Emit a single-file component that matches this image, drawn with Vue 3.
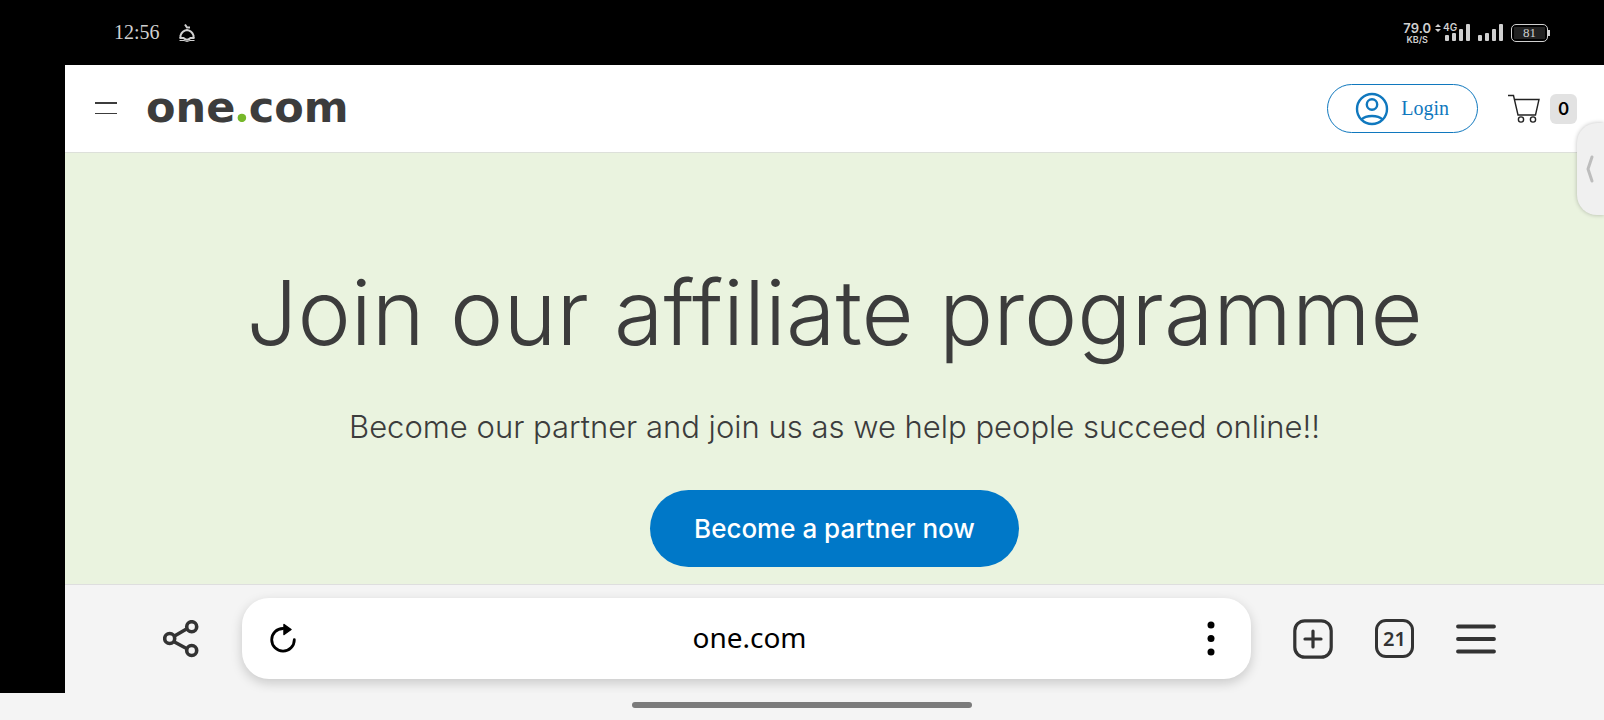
<template>
  <div class="screen">
    <div class="status-bar">
      <div class="status-left">
        <time class="clock">{{ time }}</time>
        <svg class="alarm" width="16" height="20" viewBox="0 0 16 20" fill="none" stroke="#d0d0d0" stroke-width="2">
          <path d="M1.500 15V12.500C2.500 9.500 5 7.500 8 7C11 7.500 13.500 9.500 14.500 12.500V15" />
          <path d="M0.500 15H4.500Q8 18.500 11.500 15H15.500" />
          <path d="M0.500 17.500H5L8 18.500L11 17.500H15.500" stroke-width="1" />
          <path d="M6 1.500L8 4.500H11" />
        </svg>
      </div>
      <div class="status-right">
        <div class="speed">
          <span class="speed-value">79.0</span>
          <span class="speed-unit">KB/S</span>
        </div>
        <div class="network">
          <svg width="6" height="8" viewBox="0 0 6 8" fill="#d0d0d0">
            <path d="M3 0L6 3H0ZM0 5H6L3 8Z" />
          </svg>
          <div class="mobile">
            <span class="network-type">4G</span>
            <svg width="25" height="17" viewBox="0 0 25 17" fill="#d0d0d0">
              <rect x="0" y="11" width="4" height="6" rx="1" />
              <rect x="7" y="9" width="4" height="8" rx="1" />
              <rect x="14" y="5" width="4" height="12" rx="1" />
              <rect x="21" y="0" width="4" height="17" rx="1" />
            </svg>
          </div>
        </div>
        <svg width="25" height="17" viewBox="0 0 25 17" fill="#d0d0d0">
          <rect x="0" y="11" width="4" height="6" rx="1" />
          <rect x="7" y="9" width="4" height="8" rx="1" />
          <rect x="14" y="5" width="4" height="12" rx="1" />
          <rect x="21" y="0" width="4" height="17" rx="1" />
        </svg>
        <div class="battery"><span class="battery-level">{{ battery }}</span></div>
      </div>
    </div>

    <div class="frame">
      <div class="cutout"></div>
      <div class="page">
        <header class="site-header">
          <button class="icon-button" aria-label="Menu">
            <svg width="22" height="14" viewBox="0 0 22 14" fill="#3c3c3c">
              <rect y="0" width="22" height="2" />
              <rect y="11" width="22" height="1" />
            </svg>
          </button>
          <a href="#" class="logo">one<span class="logo-dot">.</span>com</a>
          <button class="login">
            <svg width="34" height="34" viewBox="0 0 34 34" fill="none" stroke="#1078be" stroke-width="2.400">
              <circle cx="17" cy="17" r="15" />
              <circle cx="17" cy="12.500" r="5.200" />
              <path d="M6.500 27.500C11 22.800 23 22.800 27.500 27.500" />
            </svg>
            Login
          </button>
          <a href="#" class="cart" aria-label="Cart">
            <svg width="32" height="30" viewBox="0 0 32 30" fill="none" stroke="#222" stroke-width="1.400">
              <path d="M0 1.500H5.500L10 21H27.500L31 5.500H6.500" />
              <circle cx="13" cy="25.500" r="2.600" />
              <circle cx="25" cy="25.500" r="2.600" />
            </svg>
            <span class="cart-count">{{ cartCount }}</span>
          </a>
        </header>

        <main class="hero">
          <h1>Join our affiliate programme</h1>
          <p>Become our partner and join us as we help people succeed online!!</p>
          <button class="cta">Become a partner now</button>
        </main>

        <nav class="toolbar">
          <button class="icon-button share" aria-label="Share">
            <svg width="36" height="38" viewBox="0 0 36 38" fill="none" stroke="#333" stroke-width="3.600">
              <path d="M11.500 16L23.500 9M11.500 22L23.500 28.500" />
              <circle cx="6.700" cy="18.500" r="5" />
              <circle cx="28.700" cy="6.700" r="5" />
              <circle cx="28.700" cy="30.500" r="5" />
            </svg>
          </button>
          <div class="address-bar">
            <button class="icon-button" aria-label="Reload">
              <svg width="26" height="32" viewBox="0 0 26 32">
                <path d="M13 5.500A11.300 11.300 0 1 0 24.300 16.700" fill="none" stroke="#000" stroke-width="2.800" stroke-linecap="round" />
                <path d="M14 1.500L21 6.500L14 11.500Z" fill="#000" stroke="#000" stroke-width="1.500" stroke-linejoin="round" />
              </svg>
            </button>
            <input v-model="address" class="address" type="text" aria-label="Address" />
            <button class="icon-button" aria-label="More">
              <svg width="8" height="36" viewBox="0 0 8 36">
                <circle cx="4" cy="4" r="3.500" />
                <circle cx="4" cy="17.500" r="3.500" />
                <circle cx="4" cy="31" r="3.500" />
              </svg>
            </button>
          </div>
          <div class="actions">
            <button class="icon-button" aria-label="New tab">
              <svg width="40" height="40" viewBox="0 0 40 40" fill="none" stroke="#333" stroke-width="3.200" stroke-linecap="round">
                <rect x="1.800" y="1.800" width="36.400" height="36.400" rx="10" />
                <path d="M20 12V28M12 20H28" />
              </svg>
            </button>
            <button class="tabs" aria-label="Tabs">{{ tabCount }}</button>
            <button class="icon-button" aria-label="Browser menu">
              <svg width="40" height="30" viewBox="0 0 40 30" stroke="#333" stroke-width="3.800" stroke-linecap="round">
                <path d="M2 2.500H38M2 15H38M2 27.500H38" />
              </svg>
            </button>
          </div>
        </nav>
      </div>
    </div>

    <div class="gesture-area"><div class="gesture-bar"></div></div>

    <button class="edge-panel" aria-label="Open side panel">
      <svg width="8" height="28" viewBox="0 0 8 28" fill="none" stroke="#bdbdbd" stroke-width="3" stroke-linecap="round" stroke-linejoin="round">
        <path d="M6 2L2 14L6 26" />
      </svg>
    </button>
  </div>
</template>

<script setup>
import { ref } from 'vue';

const time = ref('12:56');
const battery = ref(81);
const cartCount = ref(0);
const tabCount = ref(21);
const address = ref('one.com');
</script>

<style>
body {
  margin: 0;
  background: #f4f4f4;
}
</style>

<style scoped>
.screen {
  position: relative;
  display: flex;
  flex-direction: column;
  min-height: 100vh;
  overflow: hidden;
  font-family: Inter, sans-serif;
  color: #3c3c3c;
}

button {
  font-family: inherit;
  border: 0;
  padding: 0;
  background: none;
  cursor: pointer;
}

svg {
  display: block;
  flex: none;
}

a {
  color: inherit;
  text-decoration: none;
}

/* phone status bar */
.status-bar {
  display: flex;
  align-items: center;
  justify-content: space-between;
  height: 65px;
  padding: 0 56px 0 114px;
  background: #000;
  color: #d0d0d0;
}

.status-left,
.status-right,
.network {
  display: flex;
  align-items: center;
}

.status-left {
  gap: 19px;
}

.clock {
  font-family: "Liberation Serif", serif;
  font-size: 20px;
}

.status-right {
  gap: 8px;
}

.speed {
  display: flex;
  flex-direction: column;
  align-items: center;
  font-weight: 600;
}

.speed-value {
  font-size: 13px;
  line-height: 13px;
}

.speed-unit {
  font-size: 9px;
  line-height: 9px;
}

.network {
  align-items: flex-start;
  gap: 4px;
  margin-left: -4px;
}

.mobile {
  position: relative;
}

.network-type {
  position: absolute;
  top: -2px;
  left: -2px;
  font-size: 10px;
  font-weight: 600;
  line-height: 10px;
}

.battery {
  position: relative;
  display: flex;
  box-sizing: border-box;
  width: 37px;
  height: 18px;
  padding: 2px;
  border: 1px solid #d0d0d0;
  border-radius: 5px;
}

.battery::after {
  content: '';
  position: absolute;
  top: 5px;
  right: -3px;
  width: 2px;
  height: 6px;
  background: #d0d0d0;
}

.battery-level {
  flex: 1;
  background: #222;
  font-family: "Liberation Serif", serif;
  font-size: 13px;
  line-height: 12px;
  text-align: center;
}

/* browser window */
.frame {
  display: flex;
  flex: 1;
}

.cutout {
  flex: none;
  width: 65px;
  background: #000;
}

.page {
  display: flex;
  flex: 1;
  flex-direction: column;
}

.site-header {
  display: flex;
  align-items: center;
  height: 87px;
  padding: 0 27px 0 30px;
  border-bottom: 1px solid #dde0da;
  background: #fff;
}

.logo {
  margin-left: 29px;
  margin-right: auto;
  padding-bottom: 4px;
  font-family: "DejaVu Sans", sans-serif;
  font-size: 43px;
  font-weight: 700;
  line-height: 56px;
}

.logo-dot {
  color: #76b82a;
  font-family: Lato, sans-serif;
  font-size: 56px;
  line-height: 40px;
}

.login {
  display: flex;
  align-items: center;
  gap: 12px;
  height: 49px;
  padding: 0 28px 0 27px;
  border: 1px solid #1078be;
  border-radius: 25px;
  color: #1078be;
  font-family: "Liberation Serif", serif;
  font-size: 20px;
}

.cart {
  display: flex;
  align-items: center;
  gap: 10px;
  margin-left: 30px;
}

.cart-count {
  width: 27px;
  border-radius: 6px;
  background: #e2e2e2;
  color: #000;
  font-size: 17px;
  font-weight: 600;
  line-height: 30px;
  text-align: center;
}

.hero {
  display: flex;
  flex: 1;
  flex-direction: column;
  align-items: center;
  padding: 112px 24px 17px;
  background: #eaf3df;
  text-align: center;
}

h1 {
  margin: 0 0 46px;
  font-size: 90px;
  font-weight: 300;
  line-height: 96px;
}

.hero p {
  margin: 0 0 43px;
  font-size: 31px;
  font-weight: 300;
  line-height: 40px;
}

.cta {
  height: 77px;
  padding: 0 44px;
  border-radius: 39px;
  background: #0078c8;
  color: #fff;
  font-size: 26px;
  font-weight: 500;
}

.toolbar {
  display: flex;
  align-items: center;
  padding: 13px 108px 14px 98px;
  border-top: 1px solid #dedede;
  background: #f4f4f4;
}

.address-bar {
  display: flex;
  flex: 1;
  align-items: center;
  height: 81px;
  margin: 0 42px 0 43px;
  padding: 0 36px 0 28px;
  border-radius: 27px;
  background: #fff;
  box-shadow: 0 4px 12px rgba(0, 0, 0, 0.18);
}

.address {
  flex: 1;
  min-width: 0;
  border: 0;
  padding: 0 4px 4px 0;
  outline: none;
  background: none;
  color: #000;
  font-family: "Noto Sans", sans-serif;
  font-size: 28px;
  text-align: center;
}

.actions {
  display: flex;
  align-items: center;
  gap: 42px;
}

.tabs {
  width: 39px;
  height: 39px;
  border: 3px solid #333;
  border-radius: 11px;
  color: #333;
  font-family: "Noto Sans", sans-serif;
  font-size: 20px;
  font-weight: 600;
  line-height: 32px;
}

.gesture-area {
  display: flex;
  justify-content: center;
  padding: 9px 0 12px;
  background: #f4f4f4;
}

.gesture-bar {
  width: 340px;
  height: 6px;
  border-radius: 3px;
  background: #7b7b7b;
}

/* system handle over the right edge of the page */
.edge-panel {
  position: absolute;
  top: 123px;
  right: 0;
  display: flex;
  align-items: center;
  width: 27px;
  height: 92px;
  padding-left: 9px;
  border-radius: 20px 0 0 20px;
  background: #f0f0f0;
  box-shadow: 0 0 4px rgba(0, 0, 0, 0.25);
}
</style>
